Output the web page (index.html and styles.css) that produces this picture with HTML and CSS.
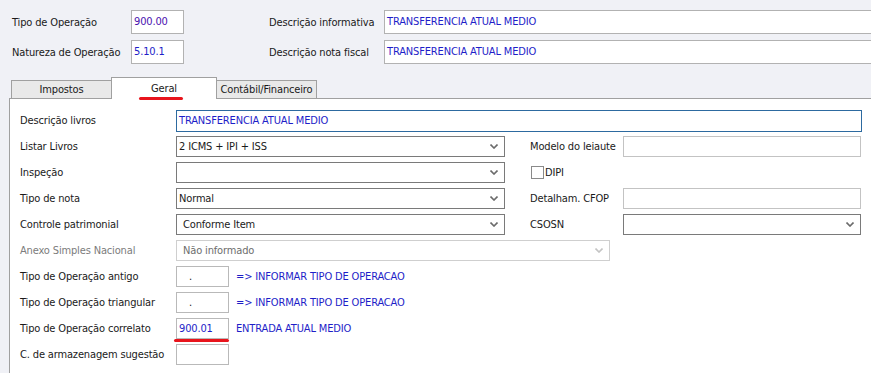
FILE: index.html
```html
<!DOCTYPE html>
<html lang="pt-br">
<head>
    <meta charset="UTF-8">
    <title>Tipo de Operação</title>
    <link rel="stylesheet" href="styles.css">
</head>
<body>
    <div class="top">
        <div class="row">
            <span class="lbl col1">Tipo de Operação</span>
            <div class="field code purple">900.00</div>
            <span class="lbl col2">Descrição informativa</span>
            <div class="field wide blue">TRANSFERENCIA ATUAL MEDIO</div>
        </div>
        <div class="row">
            <span class="lbl col1">Natureza de Operação</span>
            <div class="field code blue">5.10.1</div>
            <span class="lbl col2">Descrição nota fiscal</span>
            <div class="field wide blue">TRANSFERENCIA ATUAL MEDIO</div>
        </div>
    </div>

    <div class="tabs">
        <div class="tab">Impostos</div>
        <div class="tab active">Geral</div>
        <div class="tab">Contábil/Financeiro</div>
    </div>

    <div class="panel">
        <div class="prow">
            <span class="plbl">Descrição livros</span>
            <div class="box focus blue long">TRANSFERENCIA ATUAL MEDIO</div>
        </div>
        <div class="prow">
            <span class="plbl">Listar Livros</span>
            <div class="box combo">2 ICMS + IPI + ISS<svg class="chev" width="8" height="5" viewBox="0 0 8 5"><polyline points="0.5,0.5 4,4 7.5,0.5" fill="none" stroke="#6b6b6b" stroke-width="1.6"/></svg></div>
            <span class="rlbl">Modelo do leiaute</span>
            <div class="box light side"></div>
        </div>
        <div class="prow">
            <span class="plbl">Inspeção</span>
            <div class="box combo"><svg class="chev" width="8" height="5" viewBox="0 0 8 5"><polyline points="0.5,0.5 4,4 7.5,0.5" fill="none" stroke="#6b6b6b" stroke-width="1.6"/></svg></div>
            <span class="check"></span><span class="checklbl">DIPI</span>
        </div>
        <div class="prow">
            <span class="plbl">Tipo de nota</span>
            <div class="box combo">Normal<svg class="chev" width="8" height="5" viewBox="0 0 8 5"><polyline points="0.5,0.5 4,4 7.5,0.5" fill="none" stroke="#6b6b6b" stroke-width="1.6"/></svg></div>
            <span class="rlbl">Detalham. CFOP</span>
            <div class="box light side"></div>
        </div>
        <div class="prow">
            <span class="plbl">Controle patrimonial</span>
            <div class="box combo indent">Conforme Item<svg class="chev" width="8" height="5" viewBox="0 0 8 5"><polyline points="0.5,0.5 4,4 7.5,0.5" fill="none" stroke="#6b6b6b" stroke-width="1.6"/></svg></div>
            <span class="rlbl">CSOSN</span>
            <div class="box combo side"><svg class="chev" width="8" height="5" viewBox="0 0 8 5"><polyline points="0.5,0.5 4,4 7.5,0.5" fill="none" stroke="#6b6b6b" stroke-width="1.6"/></svg></div>
        </div>
        <div class="prow">
            <span class="plbl disabled">Anexo Simples Nacional</span>
            <div class="box combo off indent">Não informado<svg class="chev" width="8" height="5" viewBox="0 0 8 5"><polyline points="0.5,0.5 4,4 7.5,0.5" fill="none" stroke="#c4c4c4" stroke-width="1.6"/></svg></div>
        </div>
        <div class="prow">
            <span class="plbl">Tipo de Operação antigo</span>
            <div class="box small dot">.</div>
            <span class="info">=&gt; INFORMAR TIPO DE OPERACAO</span>
        </div>
        <div class="prow">
            <span class="plbl">Tipo de Operação triangular</span>
            <div class="box small dot">.</div>
            <span class="info">=&gt; INFORMAR TIPO DE OPERACAO</span>
        </div>
        <div class="prow">
            <span class="plbl">Tipo de Operação correlato</span>
            <div class="box small blue marked">900.01</div>
            <span class="info">ENTRADA ATUAL MEDIO</span>
        </div>
        <div class="prow">
            <span class="plbl">C. de armazenagem sugestão</span>
            <div class="box small"></div>
        </div>
    </div>
</body>
</html>
```

FILE: styles.css
```css
*{margin: 0; padding: 0; box-sizing: border-box;}
body{background-color: #f0f1f6; font-family: "DejaVu Sans Condensed", "DejaVu Sans", sans-serif; font-stretch: condensed; font-size: 11px; letter-spacing: -0.15px; color: #1a1a1a; overflow: hidden; width: 871px; height: 373px;}

/* cabecalho */
.top{padding: 10px 0 0 12px; height: 64px;}
.row{display: flex; align-items: center; height: 24px; margin-bottom: 6px; white-space: nowrap;}
.row > *{flex: none;}
.lbl.col1{width: 119px;}
.lbl.col2{width: 115px; margin-left: 85px;}
.field{height: 24px; line-height: 22px; background-color: #fff; border: 1px solid #b2b2b2; padding-left: 2px;}
.field.code{width: 53px;}
.field.wide{width: 520px;}
.purple{color: #4a12b0;}
.blue{color: #1e1ec8;}

/* abas */
.tabs{display: flex; align-items: flex-end; margin: 13px 0 0 11px; height: 21px; position: relative; z-index: 1;}
.tab{height: 18px; line-height: 17px; text-align: center; background-color: #e9e9e9; border: 1px solid #a0a0a0; border-bottom: none; width: 101px;}
.tab.active{height: 22px; width: 106px; margin: 0 -1px -1px -1px; background-color: #fff; line-height: 21px; position: relative; z-index: 2;}
.tab.active::after{content: ""; position: absolute; left: 27px; top: 19px; width: 44px; height: 3px; border-radius: 2px; background-color: #e8141c;}

/* painel */
.panel{margin-left: 9px; background-color: #fff; border-left: 1px solid #a0a0a0; border-top: 1px solid #a0a0a0; height: 290px; padding: 11px 0 0 10px;}
.prow{display: flex; align-items: center; height: 21px; margin-bottom: 5px; white-space: nowrap;}
.prow > *{flex: none;}
.plbl{width: 156px;}
.plbl.disabled{color: #7c7c7c;}
.box{height: 21px; line-height: 19px; border: 1px solid #7a7a7a; background-color: #fff; padding-left: 2px; position: relative;}
.box.focus{border-color: #2d6aa0;}
.box.long{width: 686px; height: 22px; line-height: 20px;}
.box.combo{width: 329px; display: flex; align-items: center; justify-content: space-between; padding-right: 6px;}
.box.indent{padding-left: 6px;}
.box.off{width: 434px; border-color: #cfcfcf; color: #6d6d6d;}
.box.light{border-color: #c3c3c3;}
.box.side{width: 238px;}
.box.small{width: 53px; border-color: #b9b9b9;}
.box.small.dot{padding-left: 12px;}
.box.marked::after{content: ""; position: absolute; left: -3px; bottom: -4px; width: 55px; height: 3px; border-radius: 2px; background-color: #e8141c;}
.chev{margin-left: auto;}
.rlbl{width: 93px; margin-left: 25px;}
.check{width: 13px; height: 13px; border: 1px solid #8a8a8a; background-color: #fff; margin-left: 26px;}
.checklbl{margin-left: 1px;}
.info{margin-left: 7px; color: #1e1ec8;}
```
